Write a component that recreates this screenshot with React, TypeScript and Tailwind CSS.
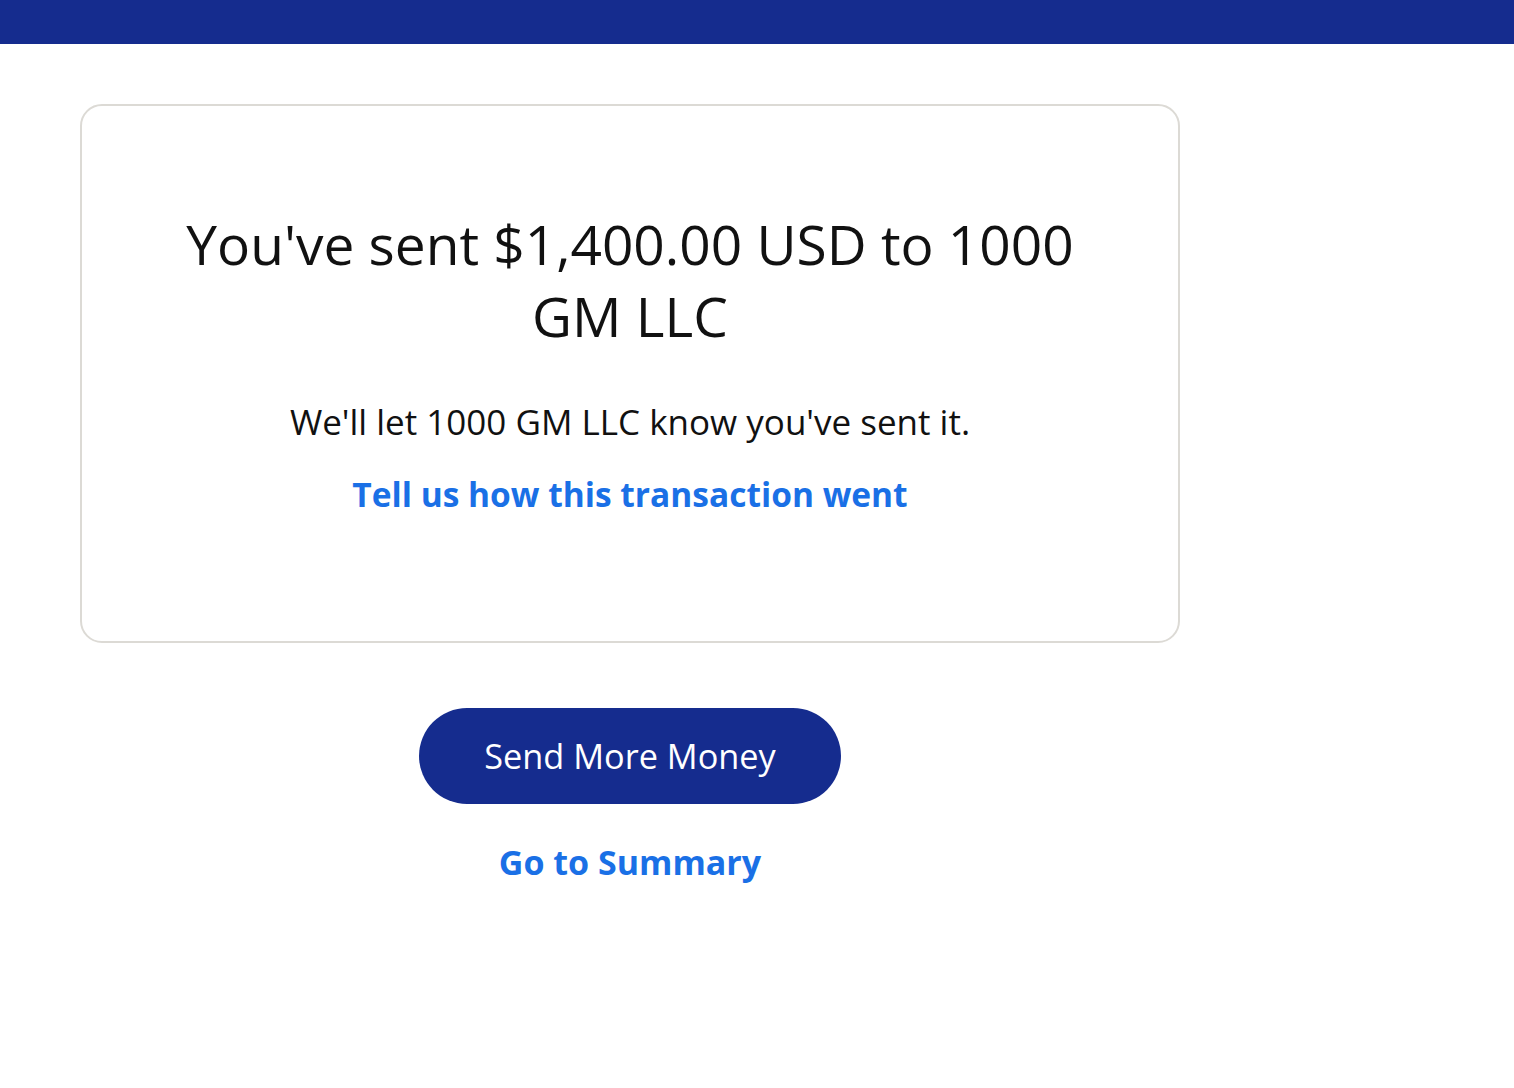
import React from "react";

export default function App() {
  return (
    <div className="min-h-screen w-full bg-white" style={{ fontFamily: '"Open Sans", "Noto Sans", sans-serif' }}>
      <div className="h-[44px] w-full bg-[#152c8e]" />
      <div className="pl-[80px] pt-[60px]">
        <div className="w-[1100px] h-[539px] rounded-[22px] border-2 border-[#dcdad5] px-[80px] pt-[102px] text-center">
          <h1 className="text-[55px] leading-[72px] text-[#111] font-normal">
            You've sent $1,400.00 USD to 1000 GM LLC
          </h1>
          <p className="mt-[48px] text-[35px] leading-[44px] text-[#111]">
            We'll let 1000 GM LLC know you've sent it.
          </p>
          <a className="mt-[28px] block text-[33.5px] leading-[44px] font-bold text-[#1a70e6]">
            Tell us how this transaction went
          </a>
        </div>
        <div className="w-[1100px] flex flex-col items-center">
          <button className="mt-[65px] h-[96px] w-[422px] rounded-full bg-[#152c8e] text-white text-[34.3px]">
            Send More Money
          </button>
          <a className="mt-[36px] text-[34px] leading-[44px] font-bold text-[#1a70e6]">Go to Summary</a>
        </div>
      </div>
    </div>
  );
}
